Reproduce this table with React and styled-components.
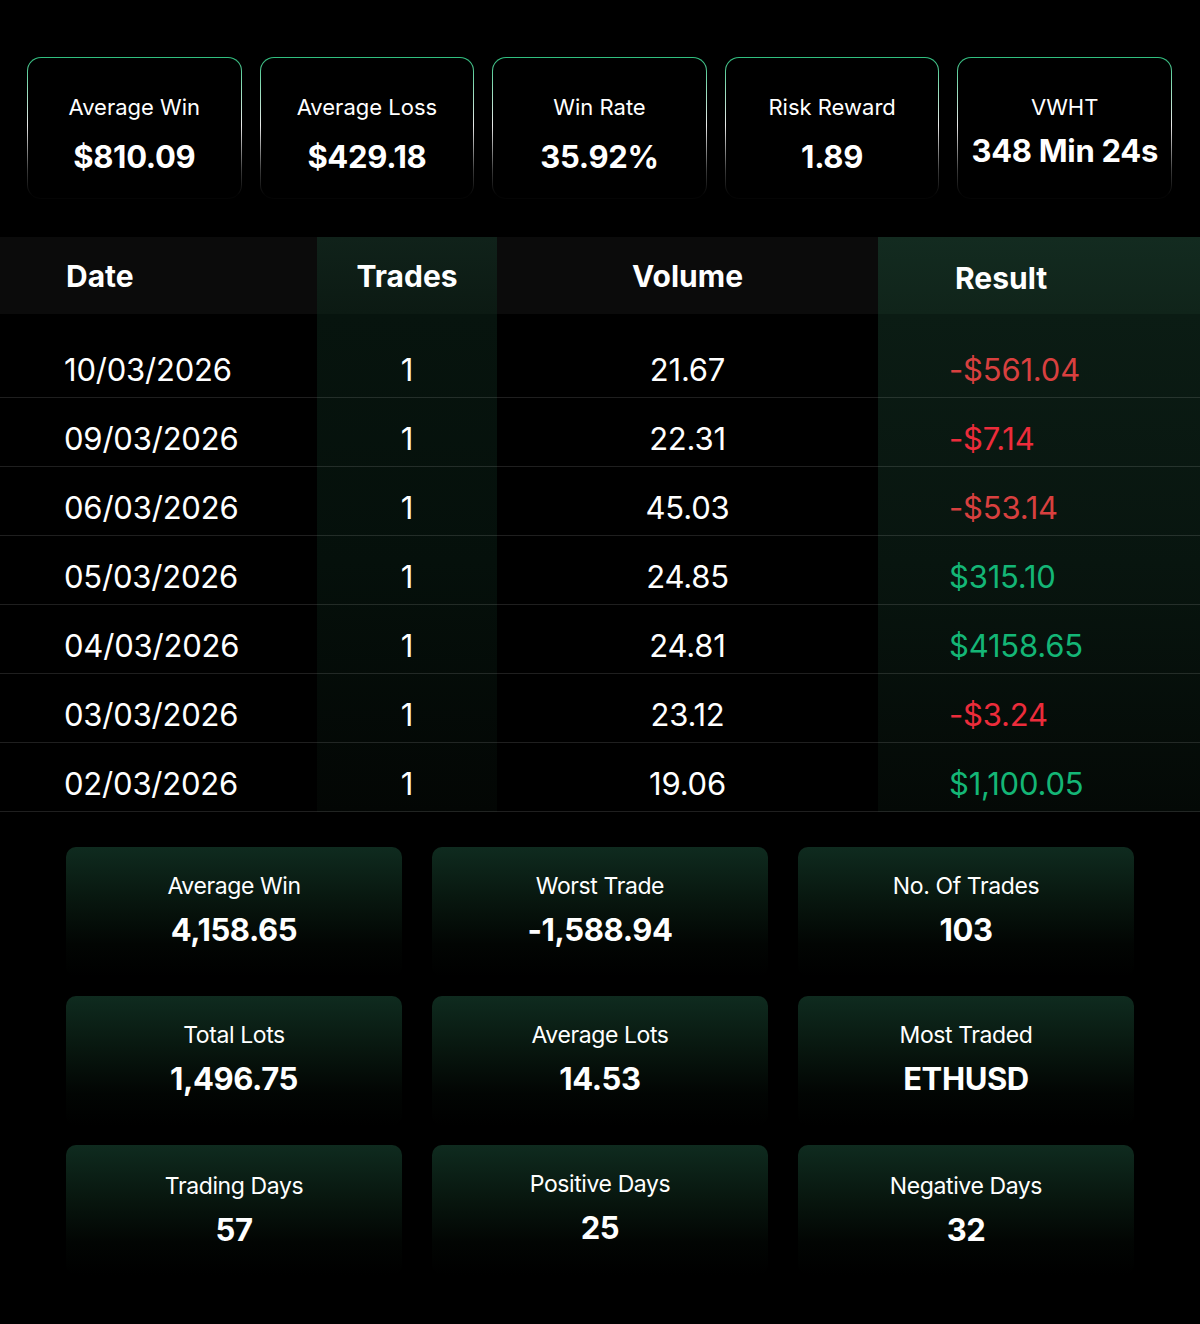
import React from "react";
import styled, { createGlobalStyle } from "styled-components";

const Global = createGlobalStyle`
  html, body { margin: 0; padding: 0; background: #000; }
  body { font-family: Inter, "Noto Sans", "Liberation Sans", sans-serif; color: #fff; }
  * { box-sizing: border-box; }
`;

const Page = styled.div`
  width: 1200px;
  min-height: 1324px;
  background: #000;
  padding-top: 57px;
`;

const TopGrid = styled.div`
  display: grid;
  grid-template-columns: repeat(5, 1fr);
  gap: 18px;
  padding: 0 28px 0 27px;
`;

const TopCard = styled.div`
  height: 142px;
  border-radius: 14px;
  border: 1px solid transparent;
  background:
    linear-gradient(#000, #000) padding-box,
    linear-gradient(180deg, #2fbf7f 0%, #8fdcb8 22%, #e8e8e8 48%, #3a3a3a 80%, #050505 97%) border-box;
  display: flex;
  flex-direction: column;
  align-items: center;
  padding-top: 36px;
`;

const TopLabel = styled.div`
  font-size: 22px;
  line-height: 26px;
  font-weight: 400;
  letter-spacing: 0;
`;

const TopValue = styled.div`
  margin-top: ${(p) => (p.$tight ? "13px" : "19px")};
  font-size: 31px;
  line-height: 36px;
  font-weight: 700;
  letter-spacing: -0.3px;
`;

const Table = styled.div`
  margin-top: 38px;
`;

const cols = "317px 180px 381px 1fr";

const HeadRow = styled.div`
  display: grid;
  grid-template-columns: ${cols};
  height: 77px;
`;

const headBg = {
  plain: "#0b0b0b",
  trades: "linear-gradient(180deg, #10221a 0%, #0c1a13 100%)",
  result: "linear-gradient(180deg, #132b20 0%, #10241a 100%)",
};

const HeadCell = styled.div`
  background: ${(p) => headBg[p.$bg]};
  display: flex;
  align-items: center;
  justify-content: ${(p) => (p.$align === "left" ? "flex-start" : "center")};
  padding-left: ${(p) => p.$pad || 0}px;
  font-size: 30px;
  font-weight: 700;
  letter-spacing: 0;
  padding-top: ${(p) => (p.$bg === "result" ? 4 : 0)}px;
`;

const Body = styled.div`
  padding-top: 15px;
  background:
    linear-gradient(180deg, #0b1c14 0%, #08150f 50%, #040906 100%) 878px 0 / 322px 100% no-repeat,
    linear-gradient(180deg, #07140e 0%, #05100b 50%, #030604 100%) 317px 0 / 180px 100% no-repeat,
    #000;
`;

const Row = styled.div`
  display: grid;
  grid-template-columns: ${cols};
  height: 69px;
  border-bottom: 1px solid rgba(255, 255, 255, 0.12);
  align-items: start;
  padding-top: 26px;
`;

const Cell = styled.div`
  font-size: 31px;
  line-height: 30px;
  font-weight: 400;
  letter-spacing: -0.2px;
  text-align: ${(p) => (p.$align === "left" ? "left" : "center")};
  padding-left: ${(p) => p.$pad || 0}px;
  color: ${(p) => p.$color || "#fff"};
`;

const StatGrid = styled.div`
  display: grid;
  grid-template-columns: repeat(3, 1fr);
  column-gap: 30px;
  row-gap: 19px;
  padding: 35px 66px 0;
`;

const StatCard = styled.div`
  height: 130px;
  border-radius: 10px;
  background: linear-gradient(180deg, #0f2b1f 0%, #08170f 40%, #020503 75%, #000 100%);
  display: flex;
  flex-direction: column;
  align-items: center;
  padding-top: ${(p) => (p.$low ? 28 : 26)}px;
`;

const StatLabel = styled.div`
  font-size: 23px;
  line-height: 26px;
  font-weight: 400;
  letter-spacing: -0.4px;
`;

const StatValue = styled.div`
  margin-top: 13px;
  font-size: 31px;
  line-height: 36px;
  font-weight: 700;
  letter-spacing: -0.4px;
`;

const top = [
  ["Average Win", "$810.09"],
  ["Average Loss", "$429.18"],
  ["Win Rate", "35.92%"],
  ["Risk Reward", "1.89"],
  ["VWHT", "348 Min 24s", true],
];

const RED = "#d8403f";
const RED2 = "#ec2c3b";
const GREEN = "#14b676";

const rows = [
  ["10/03/2026", "1", "21.67", "-$561.04", RED],
  ["09/03/2026", "1", "22.31", "-$7.14", RED2],
  ["06/03/2026", "1", "45.03", "-$53.14", RED],
  ["05/03/2026", "1", "24.85", "$315.10", GREEN],
  ["04/03/2026", "1", "24.81", "$4158.65", GREEN],
  ["03/03/2026", "1", "23.12", "-$3.24", RED2],
  ["02/03/2026", "1", "19.06", "$1,100.05", GREEN],
];

const stats = [
  ["Average Win", "4,158.65"],
  ["Worst Trade", "-1,588.94"],
  ["No. Of Trades", "103"],
  ["Total Lots", "1,496.75"],
  ["Average Lots", "14.53"],
  ["Most Traded", "ETHUSD"],
  ["Trading Days", "57", true],
  ["Positive Days", "25"],
  ["Negative Days", "32", true],
];

export default function App() {
  return (
    <Page>
      <Global />
      <TopGrid>
        {top.map(([l, v, t]) => (
          <TopCard key={l}>
            <TopLabel>{l}</TopLabel>
            <TopValue $tight={t}>{v}</TopValue>
          </TopCard>
        ))}
      </TopGrid>
      <Table>
        <HeadRow>
          <HeadCell $bg="plain" $align="left" $pad={66}>Date</HeadCell>
          <HeadCell $bg="trades">Trades</HeadCell>
          <HeadCell $bg="plain">Volume</HeadCell>
          <HeadCell $bg="result" $align="left" $pad={77}>Result</HeadCell>
        </HeadRow>
        <Body>
          {rows.map(([d, t, v, r, c]) => (
            <Row key={d}>
              <Cell $align="left" $pad={64}>{d}</Cell>
              <Cell>{t}</Cell>
              <Cell>{v}</Cell>
              <Cell $align="left" $pad={71} $color={c}>{r}</Cell>
            </Row>
          ))}
        </Body>
      </Table>
      <StatGrid>
        {stats.map(([l, v, low]) => (
          <StatCard key={l} $low={low}>
            <StatLabel>{l}</StatLabel>
            <StatValue>{v}</StatValue>
          </StatCard>
        ))}
      </StatGrid>
    </Page>
  );
}
